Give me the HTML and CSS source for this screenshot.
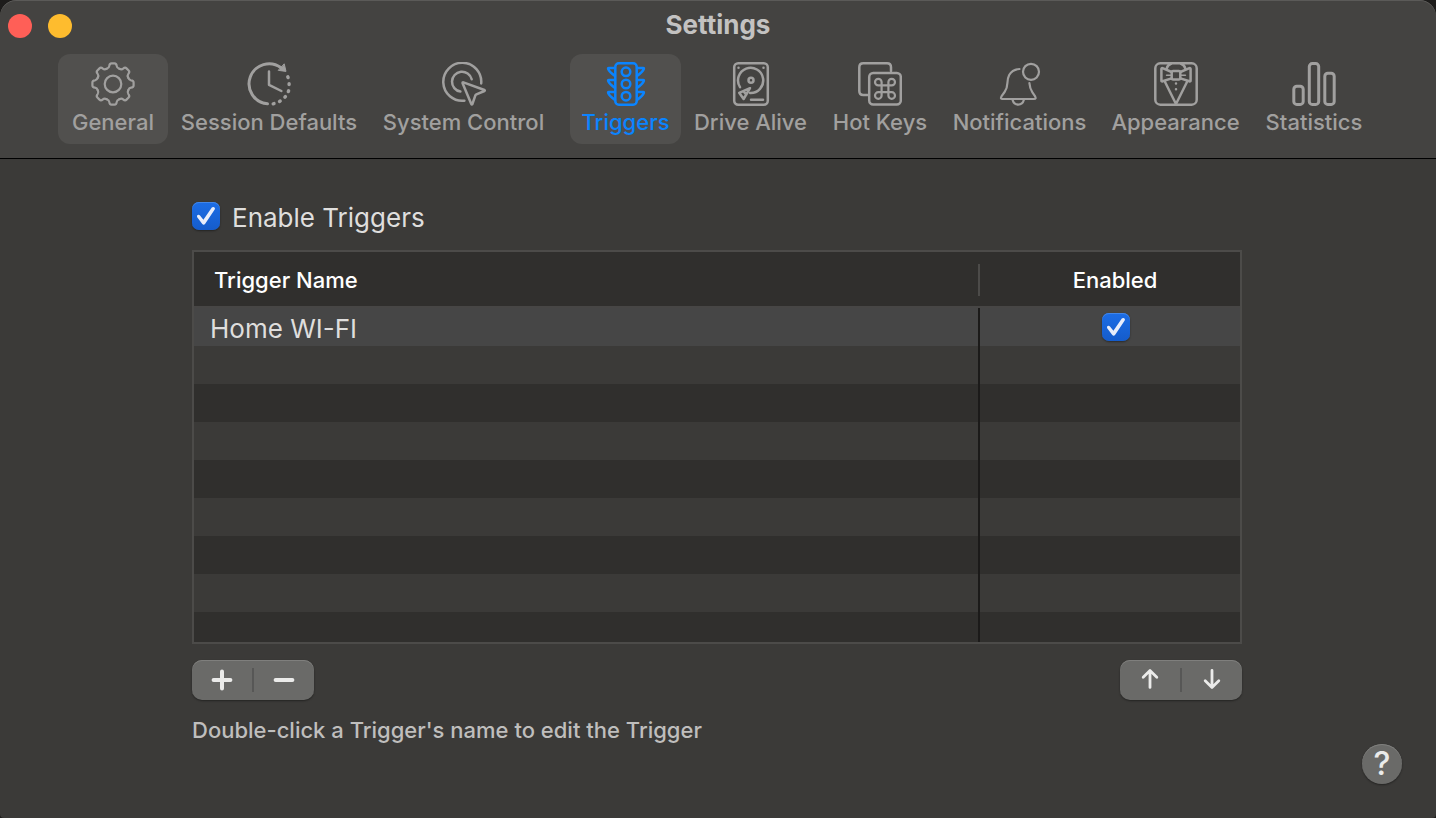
FILE: index.html
```html
<!DOCTYPE html>
<html lang="en">
<head>
<meta charset="utf-8">
<title>Settings</title>
<link rel="stylesheet" href="styles.css">
</head>
<body>
<div class="window">
  <header class="toolbar">
    <div class="titlebar">
      <div class="lights">
        <button class="light close" aria-label="Close"></button>
        <button class="light minimize" aria-label="Minimize"></button>
      </div>
      <h1 class="title">Settings</h1>
    </div>
    <nav class="tabs" aria-label="Settings sections">
      <button class="tab hovered">
        <svg class="icon thin" viewBox="0 0 44 44">
          <defs><path id="tooth" d="M-6.3-15.2Q-3.9-16-3.7-18Q-3.5-20.6-1.5-20.6H1.5Q3.5-20.6 3.7-18Q3.9-16 6.3-15.2"/></defs>
          <g transform="translate(22 22)">
            <use href="#tooth"/><use href="#tooth" transform="rotate(45)"/><use href="#tooth" transform="rotate(90)"/><use href="#tooth" transform="rotate(135)"/><use href="#tooth" transform="rotate(180)"/><use href="#tooth" transform="rotate(225)"/><use href="#tooth" transform="rotate(270)"/><use href="#tooth" transform="rotate(315)"/>
            <circle r="8.3"/>
          </g>
        </svg>
        <span>General</span>
      </button>
      <button class="tab">
        <svg class="icon" viewBox="0 0 44 44">
          <g transform="translate(1 0)">
            <path stroke-width="3" d="M19.5 41.8A20 20 0 1 1 33 5.8"/>
            <path class="solid" stroke-width="1" d="M36.3 2.2L38 9.4L30.6 8.4Z"/>
            <path d="M21 9.4V22.8L33.4 29"/>
            <path stroke-width="3.4" d="M39.8 14.8l.3 .8M41.1 21.8v.8M40.6 28.8l-.3 .8M37.4 34.6l-.5 .6M32.2 39.1l-.7 .4M26 41.6l-.8 .2"/>
          </g>
        </svg>
        <span>Session Defaults</span>
      </button>
      <button class="tab before-active">
        <svg class="icon" viewBox="0 0 44 44">
          <g transform="translate(-.6 0)">
            <path d="M39.8 21.5A19 19 0 1 0 23 38.7"/>
            <path d="M30.3 17.2A10 10 0 1 0 19 29.6"/>
            <path d="M22 20.4L43 28Q43.8 28.5 43 29L35 32.4Q34.2 32.8 33.8 33.8L31 42Q30.4 43 29.9 42L21.2 21.2Q21 20.2 22 20.4Z"/>
          </g>
        </svg>
        <span>System Control</span>
      </button>
      <button class="tab active" aria-current="page">
        <svg class="icon" viewBox="0 0 44 44">
          <rect x="11.3" y="1.3" width="21.4" height="41.4" rx="3.5"/>
          <circle cx="22" cy="9.8" r="4.3"/><circle cx="22" cy="22" r="4.3"/><circle cx="22" cy="34.2" r="4.3"/>
          <path d="M11 6H4.8Q3.8 6 4.2 7Q5.4 10 11 14M11 18H4.8Q3.8 18 4.2 19Q5.4 22 11 26M11 30H4.8Q3.8 30 4.2 31Q5.4 34 11 38M33 6H39.2Q40.2 6 39.8 7Q38.6 10 33 14M33 18H39.2Q40.2 18 39.8 19Q38.6 22 33 26M33 30H39.2Q40.2 30 39.8 31Q38.6 34 33 38"/>
        </svg>
        <span>Triggers</span>
      </button>
      <button class="tab">
        <svg class="icon" viewBox="0 0 44 44">
          <rect x="5.2" y="1.3" width="33.6" height="41.4" rx="4"/>
          <path d="M11 25.2A12.6 12.6 0 1 1 21 31"/>
          <circle cx="22" cy="18.3" r="2.5"/>
          <path d="M21 26.2L10.2 30.8L14.6 37ZM14.4 29.2L17.4 32.6"/>
          <path d="M22 37.7H34"/>
          <path d="M9.5 5.8h.01M34.5 5.8h.01"/>
        </svg>
        <span>Drive Alive</span>
      </button>
      <button class="tab">
        <svg class="icon" viewBox="0 0 44 44">
          <path d="M33 9V5.3Q33 1.3 29 1.3H5.3Q1.3 1.3 1.3 5.3V29Q1.3 33 5.3 33H9.5"/>
          <rect x="11.2" y="11" width="31.6" height="31.6" rx="4"/>
          <path stroke-width="2.2" d="M23.6 23.4V20.1A3.3 3.3 0 1 0 20.3 23.4H33.7A3.3 3.3 0 1 0 30.4 20.1V33.5A3.3 3.3 0 1 0 33.7 30.2H20.3A3.3 3.3 0 1 0 23.6 33.5Z"/>
        </svg>
        <span>Hot Keys</span>
      </button>
      <button class="tab">
        <svg class="icon thin" viewBox="0 0 44 44">
          <circle cx="33" cy="9.8" r="8"/>
          <path d="M21.5 7Q14.5 7.4 11.2 13Q9.6 16 9.4 21Q9.2 26.5 6.6 30L3.6 34.2Q2 37 4.6 37H36Q38.6 37 37 34.2L34.4 30.4Q31.8 26.6 31.4 21"/>
          <path d="M14.6 38Q15.8 42.6 20.2 42.6Q24.6 42.6 25.8 38"/>
        </svg>
        <span>Notifications</span>
      </button>
      <button class="tab">
        <svg class="icon" viewBox="0 0 44 44">
          <rect x="1.3" y="1.3" width="41.4" height="41.4" rx="5"/>
          <path d="M10.8 19.5L22 42L33.2 19.5"/>
          <rect x="17.7" y="9" width="8.6" height="8.6" rx="1.5"/>
          <path d="M17.6 10L8.6 6.2Q7.4 5.8 7.4 7V18.4Q7.4 19.8 8.6 19.3L17.6 16.4M26.4 10L35.4 6.2Q36.6 5.8 36.6 7V18.4Q36.6 19.8 35.4 19.3L26.4 16.4"/>
          <path d="M12.6 6.8Q13.6 2.8 17 1.8M31.4 6.8Q30.4 2.8 27 1.8"/>
          <path stroke-width="1.6" d="M12.6 13.2H17M31.4 13.2H27"/>
          <path d="M22 21.4h.01M22 27.2h.01"/>
        </svg>
        <span>Appearance</span>
      </button>
      <button class="tab">
        <svg class="icon bars" viewBox="0 0 44 44">
          <rect x="1.8" y="24.2" width="9.4" height="18.2" rx="3"/>
          <rect x="17.3" y="1.6" width="9.4" height="40.8" rx="3"/>
          <rect x="32.8" y="11.2" width="9.4" height="31.2" rx="3"/>
        </svg>
        <span>Statistics</span>
      </button>
    </nav>
  </header>

  <main class="content">
    <label class="enable"><input class="check" type="checkbox" checked><span>Enable Triggers</span></label>

    <table class="triggers">
      <thead>
        <tr><th class="name" scope="col">Trigger Name</th><th class="state" scope="col">Enabled</th></tr>
      </thead>
      <tbody>
        <tr class="selected"><td class="name">Home WI-FI</td><td class="state"><input class="check" type="checkbox" aria-label="Home WI-FI enabled" checked></td></tr>
        <tr><td></td><td></td></tr>
        <tr><td></td><td></td></tr>
        <tr><td></td><td></td></tr>
        <tr><td></td><td></td></tr>
        <tr><td></td><td></td></tr>
        <tr><td></td><td></td></tr>
        <tr><td></td><td></td></tr>
        <tr class="clipped"><td></td><td></td></tr>
      </tbody>
    </table>

    <div class="actions">
      <div class="segmented">
        <button class="segment" aria-label="Add trigger"><svg class="glyph heavy" viewBox="0 0 24 24"><path d="M12 3.6V20.4M3.6 12H20.4"/></svg></button>
        <button class="segment" aria-label="Remove trigger"><svg class="glyph heavy" viewBox="0 0 24 24"><path d="M3.6 12H20.4"/></svg></button>
      </div>
      <div class="segmented">
        <button class="segment" aria-label="Move up"><svg class="glyph" viewBox="0 0 24 24"><path d="M12 19.4V2.8M5.2 9.2L12 2.6L18.8 9.2"/></svg></button>
        <button class="segment" aria-label="Move down"><svg class="glyph" viewBox="0 0 24 24"><path d="M12 2.4V19M5.2 12.8L12 19.4L18.8 12.8"/></svg></button>
      </div>
    </div>
    <p class="hint">Double-click a Trigger's name to edit the Trigger</p>
  </main>

  <footer class="footer"><button class="help" aria-label="Help">?</button></footer>
</div>
</body>
</html>
```
FILE: styles.css
```css
* {
  box-sizing: border-box;
}

body {
  margin: 0;
  background: #1d1c1b;
  font-family: Inter, "Liberation Sans", sans-serif;
  color: #dfdedd;
}

button {
  margin: 0;
  padding: 0;
  border: 0;
  background: none;
  color: inherit;
  font: inherit;
}

.window {
  display: flex;
  flex-direction: column;
  min-height: 100vh;
  overflow: hidden;
  border-radius: 16px 16px 4px 4px;
  background: #3b3a38;
}

.toolbar {
  padding-bottom: 14px;
  border-bottom: 1px solid #000;
  border-radius: 16px 16px 0 0;
  background: #444341;
  box-shadow: inset 0 1px 0 #5b5a58;
}

.titlebar {
  display: grid;
  grid-template-columns: 1fr auto 1fr;
  align-items: center;
  height: 54px;
  padding: 0 8px 2px;
}

.lights {
  display: flex;
  gap: 16px;
}

.light {
  width: 24px;
  height: 24px;
  border-radius: 50%;
}

.close {
  background: #ff5f57;
}

.minimize {
  background: #febc2e;
}

.title {
  margin: 0;
  padding-bottom: 2px;
  color: #c3c2c1;
  font-size: 26px;
  font-weight: 700;
  line-height: 32px;
}

.tabs {
  display: grid;
  grid-template-columns: 110fr 202fr 200fr 111fr 139fr 120fr 159fr 153fr 124fr;
  padding: 0 60px 0 58px;
}

.tab {
  display: flex;
  flex-direction: column;
  align-items: center;
  min-width: 0;
  height: 90px;
  padding-top: 8px;
  border-radius: 12px;
  color: #a1a09f;
  font-size: 22px;
  font-weight: 500;
  line-height: 32px;
  white-space: nowrap;
}

.before-active {
  margin-right: 13px;
}

.hovered,
.active {
  background: #51504e;
}

.active {
  color: #0a84ff;
}

.icon {
  flex: none;
  width: 44px;
  height: 44px;
  fill: none;
  stroke: currentColor;
  stroke-width: 2.5;
  stroke-linecap: round;
  stroke-linejoin: round;
}

.thin {
  stroke-width: 2.2;
}

.bars {
  stroke-width: 3;
}

.solid {
  fill: currentColor;
}

.content {
  padding: 41px 194px 0 192px;
}

.enable {
  display: flex;
  gap: 12px;
  height: 36px;
  padding-top: 2px;
  font-size: 26px;
  line-height: 32px;
}

.check {
  position: relative;
  flex: none;
  width: 28px;
  height: 28px;
  margin: 0;
  appearance: none;
  border-radius: 7px;
  background: linear-gradient(#1c6de6, #155ccb);
  box-shadow: inset 0 1px 0 #4286e8, 0 1px 2px #00000066;
}

.check::after {
  content: "";
  position: absolute;
  inset: 0;
  background: #e9eefb;
  clip-path: path("M5.2 15.2Q4.4 14 5.6 13Q6.9 12.2 8 13.4L11.4 17.7L19.8 5.6Q20.8 4.4 22.2 5.2Q23.5 6.1 22.7 7.5L13.2 21.8Q11.7 23.6 10.1 21.8Z");
}

.triggers {
  width: 100%;
  margin-top: 14px;
  border: 2px solid #4c4b49;
  border-collapse: separate;
  border-spacing: 0;
  table-layout: fixed;
}

.triggers th {
  position: relative;
  height: 56px;
  padding: 2px 0 0 20px;
  border-bottom: 2px solid #474645;
  background: #302f2d;
  color: #fff;
  font-size: 22px;
  font-weight: 500;
  line-height: 28px;
  text-align: left;
}

.triggers th.name::after {
  content: "";
  position: absolute;
  top: 12px;
  right: 0;
  width: 2px;
  height: 32px;
  background: #4c4b49;
}

.triggers th.state {
  width: 260px;
  padding-left: 10px;
  text-align: center;
}

.triggers td {
  height: 38px;
  padding: 0;
  background: #3b3a38;
}

.triggers td:first-child {
  border-right: 2px solid #1b1a19;
}

.triggers tr:nth-child(odd) td {
  background: #302f2d;
}

.triggers tr.selected:nth-child(odd) td {
  background: #464646;
}

.triggers .clipped td {
  height: 30px;
}

.triggers td.name {
  padding: 4px 0 0 16px;
  font-size: 26px;
  line-height: 34px;
}

.triggers td.state {
  padding-left: 12px;
  text-align: center;
}

.triggers .check {
  display: block;
  margin: 0 auto;
}

.actions {
  display: flex;
  justify-content: space-between;
  margin-top: 16px;
}

.segmented {
  display: flex;
  width: 122px;
  height: 40px;
  padding: 8px 0;
  border-radius: 10px;
  background: #6a6a68;
  box-shadow: inset 0 1px 0 #7f7f7d, 0 1px 2px #00000066;
}

.segment {
  display: flex;
  flex: 1;
  align-items: center;
  justify-content: center;
}

.segment + .segment {
  border-left: 2px solid #575756;
}

.glyph {
  width: 24px;
  height: 24px;
  fill: none;
  stroke: #ebebea;
  stroke-width: 2.8;
  stroke-linecap: round;
  stroke-linejoin: round;
}

.heavy {
  stroke-width: 4;
}

.hint {
  margin: 16px 0 0;
  color: #bfbebd;
  font-size: 22px;
  font-weight: 500;
  line-height: 28px;
}

.footer {
  display: flex;
  justify-content: flex-end;
  margin-top: auto;
  padding: 0 34px 34px;
}

.help {
  width: 40px;
  height: 40px;
  border-radius: 50%;
  background: #6a6a68;
  box-shadow: inset 0 1px 0 #7f7f7d, 0 1px 2px #00000066;
  color: #ebebea;
  font-size: 32px;
  font-weight: 500;
  line-height: 40px;
  text-align: center;
}
```
